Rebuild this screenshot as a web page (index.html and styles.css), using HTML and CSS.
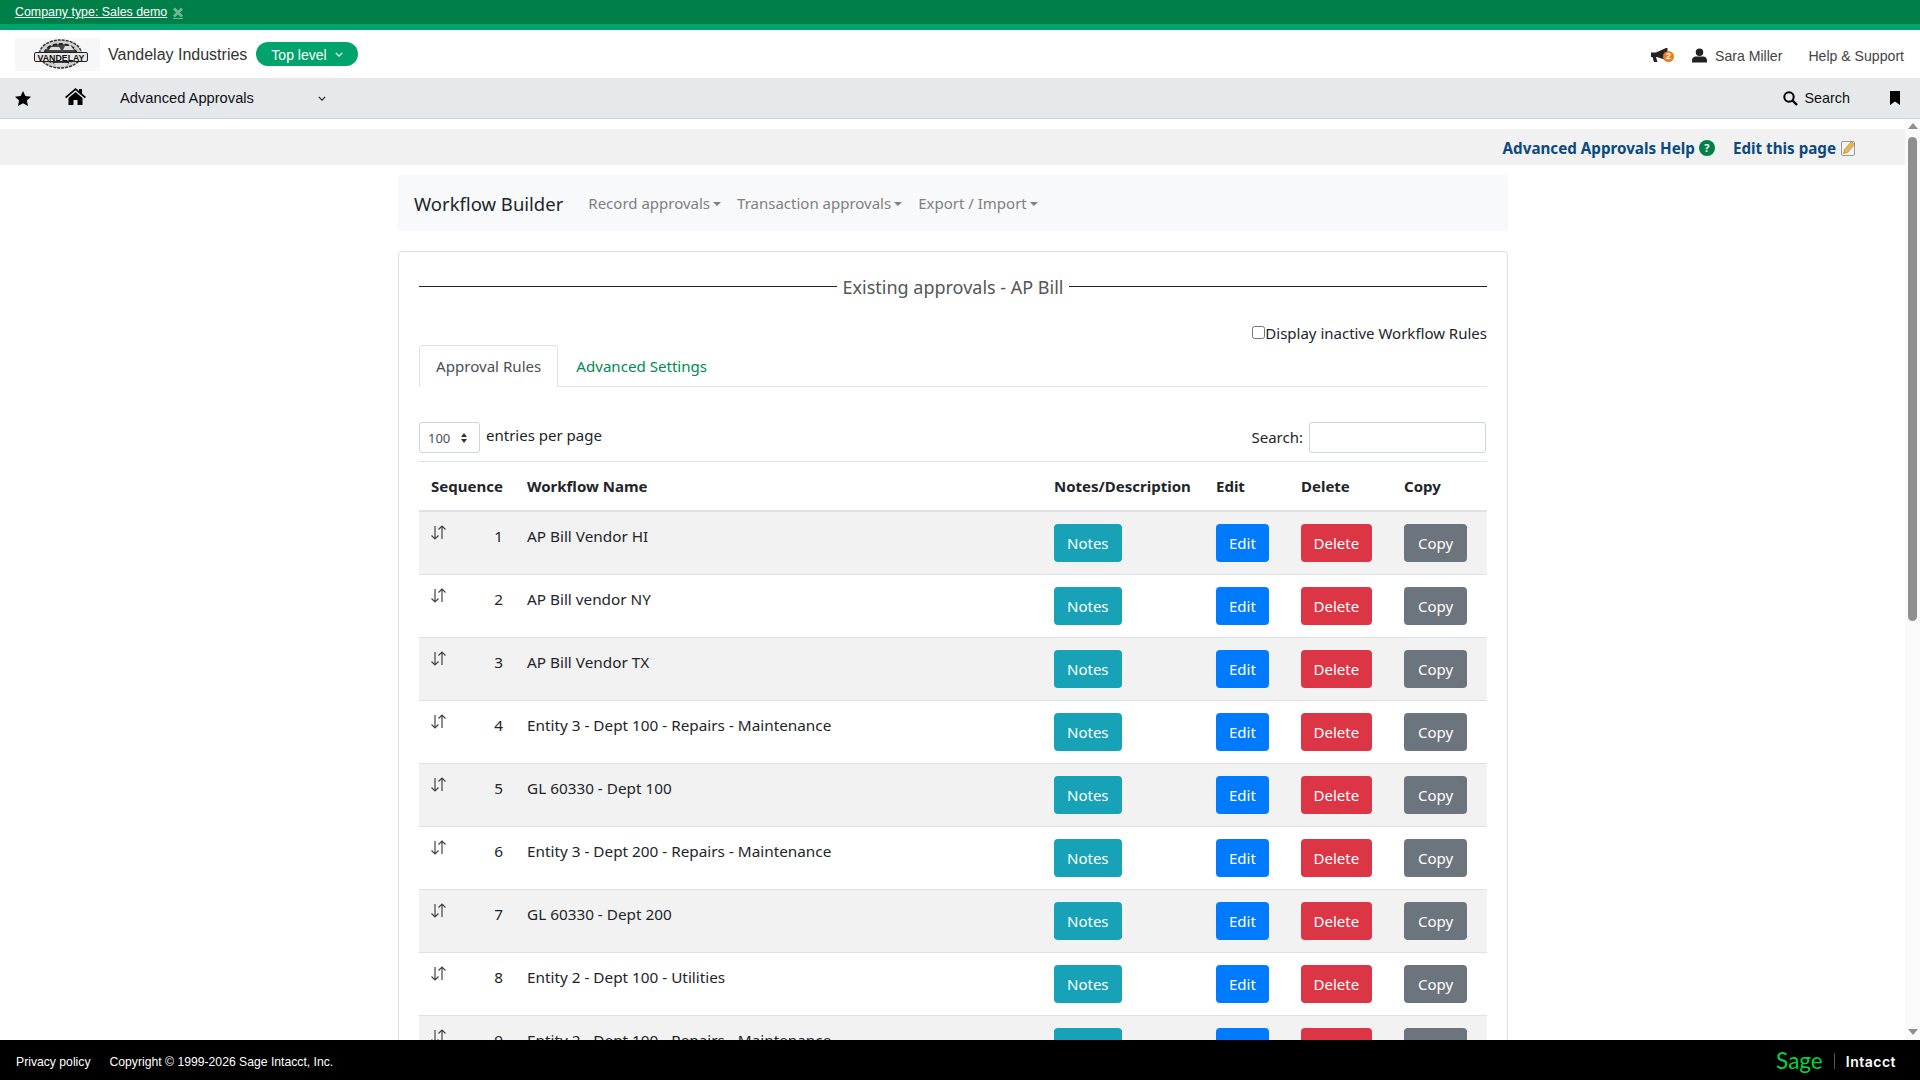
FILE: index.html
```html
<!DOCTYPE html>
<html lang="en">
  <head>
    <meta charset="UTF-8" />
    <title>Advanced Approvals</title>
    <link rel="stylesheet" href="styles.css">
  </head>

  <body>
    <!-- Company strip -->
    <div class="company-strip">
      <a class="company-link" href="#">Company type: Sales demo</a>
      <svg class="company-close" viewBox="0 0 10 12" width="10" height="12"><path d="M1 1.500l8 8M9 1.500l-8 8" stroke="#6fb596" stroke-width="2.800" fill="none"/><path d="M0 11.500h10" stroke="#6fb596" stroke-width="1"/></svg>
    </div>

    <!-- Header -->
    <div class="header">
      <div class="logo">
        <svg viewBox="0 0 85 33" width="85" height="33">
          <ellipse cx="45.500" cy="16" rx="21" ry="14" fill="#cfcfcf" stroke="#333" stroke-width="1.500" stroke-dasharray="3 1"/>
          <ellipse cx="45.500" cy="16" rx="16" ry="10" fill="#444" stroke="#222" stroke-width="2" stroke-dasharray="4 2"/>
          <path d="M36 9h8l2 3H34zM50 8h6l3 4H48zM38 25h16l-4 3h-8z" fill="#ddd"/>
          <rect x="19.500" y="14.500" width="53" height="9" rx="1.500" fill="#e8e8e8" stroke="#222" stroke-width="1"/>
          <text x="46" y="22.500" class="logo-text" text-anchor="middle" textLength="47" lengthAdjust="spacingAndGlyphs">VANDELAY</text>
        </svg>
      </div>
      <span class="company-name">Vandelay Industries</span>
      <span class="level-pill">Top level
        <svg viewBox="0 0 10 6" width="8" height="5"><path d="M1 1l4 4 4-4" stroke="#fff" stroke-width="1.600" fill="none"/></svg>
      </span>
      <div class="header-right">
        <span class="megaphone">
          <svg viewBox="0 0 18 14" width="18" height="14"><path d="M0 4.500h5L15 0h1.500v12H15L6 9H5l1.500 5H3L1.500 9H0z" fill="#222"/></svg>
          <span class="megaphone-badge">2</span>
        </span>
        <svg class="user-icon" viewBox="0 0 16 15" width="15" height="15"><circle cx="8" cy="4" r="4" fill="#222"/><path d="M0 15v-2.500C0 10 2 8.500 4 8.500h8c2 0 4 1.500 4 4V15z" fill="#222"/></svg>
        <span class="user-name">Sara Miller</span>
        <span class="help-support">Help &amp; Support</span>
      </div>
    </div>

    <!-- Menu -->
    <div class="menu">
      <svg class="star-icon" viewBox="0 0 16 15" width="16" height="15"><path d="M8 0l2.400 5 5.600.7-4.100 3.800 1.100 5.500L8 12.300 3 15l1.100-5.500L0 5.700 5.600 5z"/></svg>
      <svg class="home-icon" viewBox="0 0 21 17" width="21" height="17"><path d="M10.500 0L14 3V1h3v4.500l4 3.500-1.200 1.300-9.300-8-9.300 8L0 9z"/><path d="M3.500 10l7-6 7 6v7h-5v-5h-4v5h-5z"/></svg>
      <span class="menu-title">Advanced Approvals</span>
      <svg class="menu-chevron" viewBox="0 0 10 6" width="8" height="5"><path d="M1 1l4 4 4-4" stroke="#222" stroke-width="1.500" fill="none"/></svg>
      <div class="menu-right">
        <svg viewBox="0 0 15 15" width="15" height="15"><circle cx="6" cy="6" r="4.700" fill="none" stroke="#000" stroke-width="2"/><path d="M9.500 9.500L14 14" stroke="#000" stroke-width="2.400"/></svg>
        <span class="menu-search">Search</span>
        <svg class="bookmark-icon" viewBox="0 0 10 14" width="10" height="14"><path d="M0 0h10v14l-5-3.500L0 14z"/></svg>
      </div>
    </div>

    <div class="page">
      <div class="content">
        <div class="help-bar">
          <a class="help-link" href="#">Advanced Approvals Help</a>
          <span class="help-circle">?</span>
          <a class="help-link edit-link" href="#">Edit this page</a>
          <svg class="edit-icon" viewBox="0 0 15 16" width="15" height="16">
            <rect x=".5" y="1.500" width="13" height="14" rx="1.500" fill="#f4f4f4" stroke="#999"/>
            <path d="M2.500 13.500l1-4 7-8 3 3-7 8z" fill="#eab64c" stroke="#a97f2c" stroke-width=".6"/>
          </svg>
        </div>

        <div class="wrapper">
          <div class="navbar">
            <span class="navbar-brand">Workflow Builder</span>
            <span class="nav-item">Record approvals</span>
            <span class="nav-item">Transaction approvals</span>
            <span class="nav-item">Export / Import</span>
          </div>

          <div class="card">
            <div class="legend"><span>Existing approvals - AP Bill</span></div>

            <label class="inactive-toggle"><input type="checkbox" class="inactive-check" />Display inactive Workflow Rules</label>

            <div class="tabs">
              <span class="tab tab-active">Approval Rules</span>
              <span class="tab tab-link">Advanced Settings</span>
            </div>

            <div class="table-tools">
              <span class="page-select">100
                <svg viewBox="0 0 8 12" width="8" height="12"><path d="M4 1l3 4H1zM4 11l3-4H1z" fill="#333"/></svg>
              </span>
              <span class="page-label">entries per page</span>
              <span class="search-label">Search:</span>
              <input class="search-input" type="text" />
            </div>

            <table class="rules">
              <thead>
                <tr>
                  <th class="col-seq">Sequence</th>
                  <th class="col-name">Workflow Name</th>
                  <th class="col-notes">Notes/Description</th>
                  <th class="col-edit">Edit</th>
                  <th class="col-delete">Delete</th>
                  <th class="col-copy">Copy</th>
                </tr>
              </thead>
              <tbody id="rows"></tbody>
            </table>
          </div>
        </div>
      </div>

      <div class="scrollbar">
        <span class="scroll-up"></span>
        <span class="scroll-thumb"></span>
        <span class="scroll-down"></span>
      </div>
    </div>

    <!-- Footer -->
    <div class="footer">
      <span class="footer-link">Privacy policy</span>
      <span class="footer-copy">Copyright © 1999-2026 Sage Intacct, Inc.</span>
      <span class="sage-logo">Sage</span>
      <span class="footer-divider"></span>
      <span class="intacct">Intacct</span>
    </div>

    <script>
      var RULES = [
        'AP Bill Vendor HI',
        'AP Bill vendor NY',
        'AP Bill Vendor TX',
        'Entity 3 - Dept 100 - Repairs - Maintenance',
        'GL 60330 - Dept 100',
        'Entity 3 - Dept 200 - Repairs - Maintenance',
        'GL 60330 - Dept 200',
        'Entity 2 - Dept 100 - Utilities',
        'Entity 2 - Dept 100 - Repairs - Maintenance'
      ];

      var ARROWS =
        '<svg class="sort-icon" viewBox="0 0 17 15" width="17" height="15">' +
        '<path d="M5 1v13M1.500 10.500L5 14l3.500-3.500" stroke="#444" stroke-width="1.200" fill="none"/>' +
        '<path d="M12 14V1M8.500 4.500L12 1l3.500 3.500" stroke="#444" stroke-width="1.200" fill="none"/>' +
        '</svg>';

      /**
       * Mount one table row per approval rule.
       */
      function mountRows() {
        var body = document.getElementById('rows');
        for (var i = 0; i < RULES.length; i++) {
          var row = document.createElement('tr');
          row.innerHTML =
            '<td class="seq">' + ARROWS + '<span>' + (i + 1) + '</span></td>' +
            '<td>' + RULES[i] + '</td>' +
            '<td><span class="btn btn-notes">Notes</span></td>' +
            '<td><span class="btn btn-edit">Edit</span></td>' +
            '<td><span class="btn btn-delete">Delete</span></td>' +
            '<td><span class="btn btn-copy">Copy</span></td>';
          body.appendChild(row);
        }
      }
      mountRows();
    </script>
  </body>
</html>
```

FILE: styles.css
```css
* {
  box-sizing: border-box;
}

html,
body {
  height: 100%;
}

body {
  margin: 0;
  display: flex;
  flex-direction: column;
  overflow: hidden;
  font-family: "Noto Sans", sans-serif;
  font-size: 15px;
  color: #212529;
  background: #fff;
}

/* --- Company strip --- */

.company-strip {
  flex: none;
  height: 30px;
  padding: 2px 0 0 15px;
  display: flex;
  align-items: flex-start;
  background: #008048;
  border-bottom: 6px solid #00a36c;
  font-family: "Liberation Sans", sans-serif;
  font-size: 12.400px;
  line-height: 20px;
}

.company-link {
  color: #fff;
}

.company-close {
  margin: 5px 0 0 6px;
}

/* --- Header --- */

.header {
  flex: none;
  height: 48px;
  padding-left: 15px;
  display: flex;
  align-items: center;
  font-family: "Liberation Sans", sans-serif;
  color: #333;
}

.logo {
  width: 85px;
  height: 33px;
  background: #f7f7f7;
  overflow: hidden;
}

.logo-text {
  font-family: "Liberation Sans", sans-serif;
  font-size: 9.500px;
  font-weight: bold;
  fill: #111;
}

.company-name {
  margin: 0 0 -1px 8px;
  font-size: 16px;
}

.level-pill {
  margin-left: 9px;
  width: 102px;
  height: 24px;
  padding: 1px 0 0 15px;
  display: flex;
  align-items: center;
  gap: 8px;
  border-radius: 12px;
  background: #00a36c;
  color: #fff;
  font-size: 14px;
}

.header-right {
  margin-left: auto;
  padding: 3px 16px 0 0;
  display: flex;
  align-items: center;
  font-size: 14.100px;
  color: #444;
}

.megaphone {
  position: relative;
  height: 15px;
  width: 23px;
}

.megaphone-badge {
  position: absolute;
  left: 12px;
  top: 3px;
  width: 11px;
  height: 11px;
  border-radius: 50%;
  background: #ef7b23;
  color: #fff;
  font-size: 9px;
  font-weight: bold;
  line-height: 11px;
  text-align: center;
}

.user-icon {
  margin-left: 18px;
}

.user-name {
  margin-left: 8px;
}

.help-support {
  margin-left: 26px;
}

/* --- Menu --- */

.menu {
  flex: none;
  height: 41px;
  padding-left: 15px;
  display: flex;
  align-items: center;
  background: #e6e9ec;
  border-bottom: 1px solid #cdd3d8;
  font-family: "Liberation Sans", sans-serif;
  font-size: 14.700px;
  color: #111;
}

.home-icon {
  margin: -4px 0 0 34px;
}

.menu-title {
  margin-left: 34px;
  width: 198px;
}

.menu-right {
  margin-left: auto;
  padding-right: 20px;
  display: flex;
  align-items: center;
}

.menu-search {
  margin-left: 6px;
  font-size: 14.400px;
}

.bookmark-icon {
  margin-left: 40px;
}

/* --- Page --- */

.page {
  flex: 1 1 0;
  min-height: 0;
  display: flex;
}

.content {
  flex: 1 1 0;
  min-width: 0;
  padding-top: 10px;
  overflow: hidden;
}

.help-bar {
  height: 36px;
  padding: 1px 49px 0 0;
  display: flex;
  align-items: center;
  justify-content: flex-end;
  background: #f1f1f1;
}

.help-link {
  color: #0b4a80;
  font-weight: 700;
  font-size: 15.200px;
  text-decoration: none;
}

.help-circle {
  margin: 1px 0 0 4px;
  width: 16px;
  height: 16px;
  border-radius: 50%;
  background: #008048;
  color: #fff;
  font-size: 11px;
  font-weight: 700;
  line-height: 16px;
  text-align: center;
}

.edit-link {
  margin-left: 18px;
}

.edit-icon {
  margin-left: 5px;
}

.wrapper {
  width: 1110px;
  margin: 10px 0 0 398px;
}

/* --- Navbar --- */

.navbar {
  height: 56px;
  padding-left: 15px;
  display: flex;
  align-items: center;
  background: #f8f9fa;
  border-radius: 4px;
}

.navbar-brand {
  margin: 1px 25px 0 1px;
  font-size: 18.500px;
}

.nav-item {
  margin-right: 16px;
  color: #7f7f7f;
}

.nav-item::after {
  content: "";
  display: inline-block;
  margin-left: 3px;
  vertical-align: 3px;
  border-top: 4px solid #7f7f7f;
  border-left: 4px solid transparent;
  border-right: 4px solid transparent;
}

/* --- Card --- */

.card {
  margin-top: 20px;
  padding: 20px 20px 0;
  border: 1px solid #dfdfdf;
  border-radius: 4px;
}

.legend {
  height: 30px;
  display: flex;
  align-items: center;
  gap: 5px;
  font-size: 18px;
  color: #555;
}

.legend::before,
.legend::after {
  content: "";
  flex: 1 1 0;
  margin-top: -1px;
  border-top: 1px solid #222;
}

.inactive-toggle {
  margin-top: 19px;
  display: flex;
  justify-content: flex-end;
  align-items: center;
  height: 24px;
}

.inactive-check {
  margin: 0 0 2px 0;
  width: 13px;
  height: 13px;
}

/* --- Tabs --- */

.tabs {
  height: 42px;
  display: flex;
  border-bottom: 1px solid #dee2e6;
}

.tab {
  height: 42px;
  padding: 0 16px;
  display: flex;
  align-items: center;
  font-size: 15.100px;
  color: #495057;
}

.tab-active {
  background: #fff;
  border: 1px solid #dee2e6;
  border-bottom-color: #fff;
  border-radius: 4px 4px 0 0;
}

.tab-link {
  margin-left: 2px;
  color: #008a50;
}

/* --- Table tools --- */

.table-tools {
  margin-top: 35px;
  height: 31px;
  display: flex;
  align-items: center;
}

.page-select {
  width: 61px;
  height: 31px;
  padding: 0 11px 0 8px;
  display: flex;
  align-items: center;
  justify-content: space-between;
  border: 1px solid #ced4da;
  border-radius: 3px;
  font-size: 13px;
  color: #495057;
}

.page-label {
  margin: -5px 0 0 6px;
}

.search-label {
  margin: -2px 0 0 auto;
}

.search-input {
  margin: 0 1px 0 6px;
  width: 177px;
  height: 31px;
  border: 1px solid #ced4da;
  border-radius: 3px;
}

/* --- Table --- */

.rules {
  margin-top: 8px;
  width: 1068px;
  table-layout: fixed;
  border-collapse: collapse;
}

.rules th {
  height: 49px;
  padding: 0 12px;
  border-top: 1px solid #dee2e6;
  border-bottom: 2px solid #dee2e6;
  text-align: left;
  font-weight: 700;
  white-space: nowrap;
}

.col-seq {
  width: 96px;
}

.col-name {
  width: 527px;
}

.col-notes {
  width: 162px;
}

.col-edit {
  width: 85px;
}

.col-delete {
  width: 103px;
}

.rules td {
  height: 63px;
  padding: 12px 12px 0;
  vertical-align: top;
  border-top: 1px solid #dee2e6;
  font-size: 15.300px;
  line-height: 24px;
}

.rules tbody tr:first-child td {
  height: 64px;
  border-top: 0;
}

.rules tbody tr:nth-child(odd) {
  background: #f2f2f2;
}

.seq {
  position: relative;
  text-align: right;
}

.sort-icon {
  position: absolute;
  left: 11px;
  top: 13px;
}

/* --- Buttons --- */

.btn {
  display: inline-block;
  height: 38px;
  padding: 0 13px;
  border-radius: 4px;
  color: #fff;
  font-size: 15px;
  line-height: 38px;
}

.btn-notes {
  background: #17a2b8;
}

.btn-edit {
  background: #007bff;
}

.btn-delete {
  padding: 0 12.500px;
  background: #dc3545;
}

.btn-copy {
  padding: 0 14px;
  background: #6c757d;
}

/* --- Scrollbar --- */

.scrollbar {
  flex: none;
  width: 15px;
  padding-top: 4px;
  display: flex;
  flex-direction: column;
  align-items: center;
  background: #fafafa;
}

.scroll-up {
  border-bottom: 6px solid #8f8f8f;
  border-left: 5px solid transparent;
  border-right: 5px solid transparent;
}

.scroll-thumb {
  margin-top: 8px;
  width: 9px;
  height: 484px;
  border-radius: 5px;
  background: #8f8f8f;
}

.scroll-down {
  margin-top: auto;
  margin-bottom: 5px;
  border-top: 6px solid #8f8f8f;
  border-left: 5px solid transparent;
  border-right: 5px solid transparent;
}

/* --- Footer --- */

.footer {
  flex: none;
  height: 40px;
  padding: 0 24px 0 16px;
  display: flex;
  align-items: center;
  background: #000;
  color: #fff;
  font-family: "Liberation Sans", sans-serif;
  font-size: 12.200px;
}

.footer-link,
.footer-copy,
.intacct {
  margin-top: 3px;
}

.footer-copy {
  margin-left: 19px;
}

.sage-logo {
  margin-left: auto;
  color: #00d639;
  font-family: "Lato", sans-serif;
  font-size: 22.500px;
}

.footer-divider {
  margin: 2px 0 0 11px;
  width: 1px;
  height: 16px;
  background: #555;
}

.intacct {
  margin-left: 11px;
  font-family: "Inter", sans-serif;
  font-size: 14px;
  font-weight: 600;
  letter-spacing: .5px;
}
```
